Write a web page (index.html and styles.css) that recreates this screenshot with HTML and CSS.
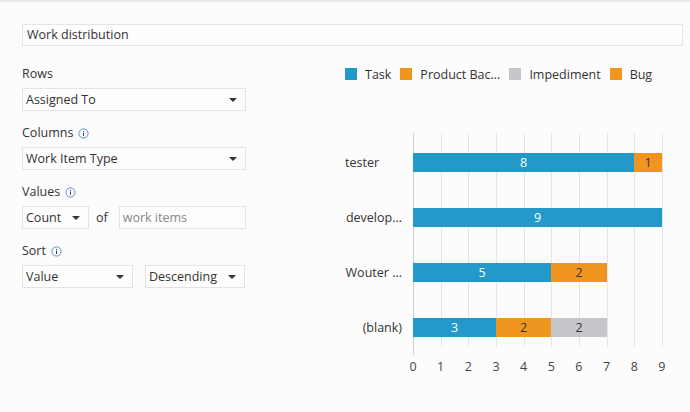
FILE: index.html
```html
<!DOCTYPE html>
<html>
<head>
<meta charset="utf-8">
<link rel="stylesheet" href="styles.css">
</head>
<body>
<div class="page">
  <div class="title-input">Work distribution</div>
  <div class="main">
    <div class="form">
      <div class="group">
        <div class="label">Rows</div>
        <div class="select"><span>Assigned To</span><i class="caret"></i></div>
      </div>
      <div class="group">
        <div class="label">Columns <svg class="info" viewBox="0 0 11 11" width="11" height="11"><circle cx="5.5" cy="5.5" r="4.6" fill="none" stroke="#5a8fd2" stroke-width="1"/><rect x="5" y="4.6" width="1" height="3.4" fill="#444"/><rect x="5" y="2.9" width="1" height="1" fill="#444"/></svg></div>
        <div class="select"><span>Work Item Type</span><i class="caret"></i></div>
      </div>
      <div class="group">
        <div class="label">Values <svg class="info" viewBox="0 0 11 11" width="11" height="11"><circle cx="5.5" cy="5.5" r="4.6" fill="none" stroke="#5a8fd2" stroke-width="1"/><rect x="5" y="4.6" width="1" height="3.4" fill="#444"/><rect x="5" y="2.9" width="1" height="1" fill="#444"/></svg></div>
        <div class="row">
          <div class="select count"><span>Count</span><i class="caret"></i></div>
          <span class="of">of</span>
          <div class="textbox">work items</div>
        </div>
      </div>
      <div class="group">
        <div class="label">Sort <svg class="info" viewBox="0 0 11 11" width="11" height="11"><circle cx="5.5" cy="5.5" r="4.6" fill="none" stroke="#5a8fd2" stroke-width="1"/><rect x="5" y="4.6" width="1" height="3.4" fill="#444"/><rect x="5" y="2.9" width="1" height="1" fill="#444"/></svg></div>
        <div class="row gap">
          <div class="select sort-by"><span>Value</span><i class="caret"></i></div>
          <div class="select sort-dir"><span>Descending</span><i class="caret"></i></div>
        </div>
      </div>
    </div>

    <div class="chart">
      <div class="legend">
        <div class="item"><i class="sw task"></i>Task</div>
        <div class="item"><i class="sw pbi"></i>Product Bac...</div>
        <div class="item"><i class="sw imp"></i>Impediment</div>
        <div class="item"><i class="sw bug"></i>Bug</div>
      </div>
      <div class="plot">
        <div class="ylabels">
          <div class="ylabel left">tester</div>
          <div class="ylabel">develop...</div>
          <div class="ylabel">Wouter ...</div>
          <div class="ylabel">(blank)</div>
        </div>
        <div class="bars">
          <div class="bar">
            <div class="seg task" style="--v:8">8</div>
            <div class="seg bug" style="--v:1">1</div>
          </div>
          <div class="bar">
            <div class="seg task" style="--v:9">9</div>
          </div>
          <div class="bar">
            <div class="seg task" style="--v:5">5</div>
            <div class="seg pbi" style="--v:2">2</div>
          </div>
          <div class="bar">
            <div class="seg task" style="--v:3">3</div>
            <div class="seg pbi" style="--v:2">2</div>
            <div class="seg imp" style="--v:2">2</div>
          </div>
        </div>
        <div></div>
        <div class="xaxis">
          <span>0</span><span>1</span><span>2</span><span>3</span><span>4</span><span>5</span><span>6</span><span>7</span><span>8</span><span>9</span>
        </div>
      </div>
    </div>
  </div>
</div>
</body>
</html>
```

FILE: styles.css
```css
* { box-sizing: border-box; }
html, body { margin: 0; padding: 0; }
body {
  font-family: "Open Sans", "Noto Sans", sans-serif;
  font-size: 12.5px;
  color: #333;
  background: #fcfcfc;
  border-top: 2px solid #e8e8e8;
  width: 690px;
  height: 412px;
  overflow: hidden;
}
.page { padding: 22px 7px 0 22px; }

.title-input {
  height: 22px;
  border: 1px solid #e4e4e4;
  background: #fdfdfd;
  padding: 0 4px;
  line-height: 20px;
  color: #333;
}

.main { display: flex; margin-top: 20px; }

.form { width: 224px; }
.group { margin-bottom: 14px; }
.label {
  line-height: 16px;
  height: 16px;
  margin-bottom: 6px;
  display: flex;
  align-items: center;
  gap: 5px;
  color: #333;
}
.info { display: block; }

.select {
  height: 23px;
  border: 1px solid #e3e3e3;
  background: #fdfdfd;
  display: flex;
  align-items: center;
  justify-content: space-between;
  padding: 0 8px 0 3px;
  color: #333;
}
.caret {
  width: 0;
  height: 0;
  border-left: 4px solid transparent;
  border-right: 4px solid transparent;
  border-top: 4px solid #333;
}
.row { display: flex; align-items: center; }
.row.gap { gap: 12px; }
.count { width: 67px; }
.of { margin: 0 11px 0 7px; color: #333; }
.textbox {
  flex: 1;
  height: 23px;
  border: 1px solid #e3e3e3;
  background: #fdfdfd;
  padding: 0 3px;
  line-height: 21px;
  color: #888;
}
.sort-by { width: 111px; }
.sort-dir { width: 100px; }

.chart { margin-left: 97px; }
.legend {
  display: flex;
  align-items: center;
  height: 16px;
  gap: 9px;
  padding-left: 2px;
  color: #333;
}
.legend .item { display: flex; align-items: center; gap: 8px; }
.sw { width: 12px; height: 12px; display: block; }

.task { background: #2299c9; }
.pbi { background: #f0961e; }
.bug { background: #f0961e; }
.imp { background: #c6c7cb; }

.plot {
  margin-top: 51px;
  display: grid;
  grid-template-columns: 70px 251px;
}
.ylabels, .bars {
  display: flex;
  flex-direction: column;
  gap: 36px;
  padding: 20px 0 18px;
}
.ylabel {
  height: 19px;
  line-height: 19px;
  text-align: right;
  padding-right: 11px;
  color: #333;
  white-space: nowrap;
}
.ylabel.left { text-align: left; padding-left: 2px; }

.bars {
  background:
    linear-gradient(#cfcfcf, #cfcfcf) 0 0 / 1px 100% no-repeat,
    repeating-linear-gradient(to right, #e4e4e4 0 1px, transparent 1px 27.667px) 0 0 / 100% calc(100% - 8px) no-repeat;
}
.bar { height: 19px; display: flex; }
.seg {
  width: calc(var(--v) * 27.667px);
  height: 19px;
  line-height: 19px;
  text-align: center;
  color: #333;
}
.seg.task { color: #fff; }

.xaxis {
  display: grid;
  grid-template-columns: repeat(10, 27.667px);
  margin-left: -13.83px;
  margin-top: 4px;
  line-height: 16px;
  color: #444;
}
.xaxis span { text-align: center; }
```
